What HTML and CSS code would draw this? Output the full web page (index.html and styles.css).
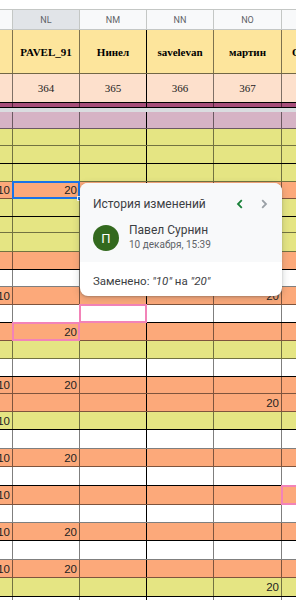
FILE: index.html
```html
<!DOCTYPE html>
<html lang="ru">
<head>
<meta charset="utf-8">
<title>Sheet</title>
<link rel="stylesheet" href="styles.css">
</head>
<body>
<div class="sheet">
  <div class="topbar"></div>
  <div class="row colhead">
    <div class="cell"></div><div class="cell on">NL</div><div class="cell">NM</div><div class="cell">NN</div><div class="cell">NO</div><div class="cell">NP</div>
  </div>
  <div class="row names">
    <div class="cell"></div><div class="cell">PAVEL_91</div><div class="cell">Нинел</div><div class="cell">savelevan</div><div class="cell">мартин</div><div class="cell">Оксана</div>
  </div>
  <div class="row nums">
    <div class="cell"></div><div class="cell">364</div><div class="cell">365</div><div class="cell">366</div><div class="cell">367</div><div class="cell">368</div>
  </div>
  <div class="row band">
    <div class="cell"></div><div class="cell"></div><div class="cell"></div><div class="cell"></div><div class="cell"></div><div class="cell"></div>
  </div>
  <div class="frozen"></div>

  <div class="row r m h17"><div class="cell"></div><div class="cell"></div><div class="cell"></div><div class="cell"></div><div class="cell"></div><div class="cell"></div></div>
  <div class="row r y h17"><div class="cell"></div><div class="cell"></div><div class="cell"></div><div class="cell"></div><div class="cell"></div><div class="cell"></div></div>
  <div class="row r y h18 k"><div class="cell"></div><div class="cell"></div><div class="cell"></div><div class="cell"></div><div class="cell"></div><div class="cell"></div></div>
  <div class="row r y h18"><div class="cell"></div><div class="cell"></div><div class="cell"></div><div class="cell"></div><div class="cell"></div><div class="cell"></div></div>
  <div class="row r o h17"><div class="cell">10</div><div class="cell">20<span class="selbox"></span><span class="handle"></span></div><div class="cell"></div><div class="cell"></div><div class="cell"></div><div class="cell"></div></div>
  <div class="row r y h18 k"><div class="cell"></div><div class="cell"></div><div class="cell"></div><div class="cell"></div><div class="cell"></div><div class="cell"></div></div>
  <div class="row r y h16"><div class="cell"></div><div class="cell"></div><div class="cell"></div><div class="cell"></div><div class="cell"></div><div class="cell"></div></div>
  <div class="row r y h19"><div class="cell"></div><div class="cell"></div><div class="cell"></div><div class="cell"></div><div class="cell"></div><div class="cell"></div></div>
  <div class="row r o h18 k"><div class="cell"></div><div class="cell"></div><div class="cell"></div><div class="cell"></div><div class="cell"></div><div class="cell"></div></div>
  <div class="row r w h17"><div class="cell"></div><div class="cell"></div><div class="cell"></div><div class="cell"></div><div class="cell"></div><div class="cell"></div></div>
  <div class="row r o h18"><div class="cell">10</div><div class="cell"></div><div class="cell"></div><div class="cell"></div><div class="cell">20</div><div class="cell"></div></div>
  <div class="row r w h18 k"><div class="cell"></div><div class="cell"></div><div class="cell"><span class="pinkbox"></span></div><div class="cell"></div><div class="cell"></div><div class="cell"></div></div>
  <div class="row r o h18"><div class="cell"></div><div class="cell">20<span class="pinkbox"></span></div><div class="cell"></div><div class="cell"></div><div class="cell"></div><div class="cell"></div></div>
  <div class="row r y h18"><div class="cell"></div><div class="cell"></div><div class="cell"></div><div class="cell"></div><div class="cell"></div><div class="cell"></div></div>
  <div class="row r w h18 k"><div class="cell"></div><div class="cell"></div><div class="cell"></div><div class="cell"></div><div class="cell"></div><div class="cell"></div></div>
  <div class="row r o h17"><div class="cell">10</div><div class="cell">20</div><div class="cell"></div><div class="cell"></div><div class="cell"></div><div class="cell"></div></div>
  <div class="row r o h18"><div class="cell"></div><div class="cell"></div><div class="cell"></div><div class="cell"></div><div class="cell">20</div><div class="cell"></div></div>
  <div class="row r y h18 k"><div class="cell">10</div><div class="cell"></div><div class="cell"></div><div class="cell"></div><div class="cell"></div><div class="cell"></div></div>
  <div class="row r w h19"><div class="cell"></div><div class="cell"></div><div class="cell"></div><div class="cell"></div><div class="cell"></div><div class="cell"></div></div>
  <div class="row r o h18"><div class="cell">10</div><div class="cell">20</div><div class="cell"></div><div class="cell"></div><div class="cell"></div><div class="cell"></div></div>
  <div class="row r w h19 k"><div class="cell"></div><div class="cell"></div><div class="cell"></div><div class="cell"></div><div class="cell"></div><div class="cell"></div></div>
  <div class="row r o h19"><div class="cell">10</div><div class="cell"></div><div class="cell"></div><div class="cell"></div><div class="cell"></div><div class="cell"><span class="pinkbox"></span></div></div>
  <div class="row r w h18"><div class="cell"></div><div class="cell"></div><div class="cell"></div><div class="cell"></div><div class="cell"></div><div class="cell"></div></div>
  <div class="row r o h18 k"><div class="cell">10</div><div class="cell">20</div><div class="cell"></div><div class="cell"></div><div class="cell"></div><div class="cell"></div></div>
  <div class="row r w h19"><div class="cell"></div><div class="cell"></div><div class="cell"></div><div class="cell"></div><div class="cell"></div><div class="cell"></div></div>
  <div class="row r o h18"><div class="cell">10</div><div class="cell">20</div><div class="cell"></div><div class="cell"></div><div class="cell"></div><div class="cell"></div></div>
  <div class="row r y h19 k"><div class="cell"></div><div class="cell"></div><div class="cell"></div><div class="cell"></div><div class="cell">20</div><div class="cell"></div></div>
  <div class="row r w h18"><div class="cell"></div><div class="cell"></div><div class="cell"></div><div class="cell"></div><div class="cell"></div><div class="cell"></div></div>

  <div class="popup">
    <div class="pop-head">
      <div class="pop-title">
        <span>История изменений</span>
        <span class="nav">
          <svg class="chev" width="12" height="12" viewBox="0 0 12 12"><path d="M7.8 2.2 L4 6 L7.8 9.8" fill="none" stroke="#188038" stroke-width="1.8"/></svg>
          <svg class="chev" width="12" height="12" viewBox="0 0 12 12"><path d="M4.2 2.2 L8 6 L4.2 9.8" fill="none" stroke="#9aa0a6" stroke-width="1.8"/></svg>
        </span>
      </div>
      <div class="user">
        <div class="avatar">П</div>
        <div class="who">
          <div class="name">Павел Сурнин</div>
          <div class="date">10 декабря, 15:39</div>
        </div>
      </div>
    </div>
    <div class="pop-body">Заменено: <i>"10"</i> на <i>"20"</i></div>
  </div>
</div>
</body>
</html>
```

FILE: styles.css
```css
* { box-sizing: border-box; }
html, body { margin: 0; padding: 0; }
body {
  width: 296px;
  height: 600px;
  overflow: hidden;
  background: #fff;
  font-family: "Liberation Sans", Arial, sans-serif;
}
.sheet { position: relative; width: 296px; height: 600px; overflow: hidden; }

.topbar { height: 10px; border-bottom: 1px solid #c4c7c5; background: #fff; }

.row {
  display: grid;
  grid-template-columns: 13px 67px 67px 67px 68px 67px;
  width: 349px;
}
.cell {
  position: relative;
  border-right: 1px solid rgba(0, 0, 0, 0.5);
  white-space: nowrap;
}
.cell:nth-child(3) { border-right-color: #000; }

.colhead {
  height: 20px;
  background: #f8f9fa;
  border-bottom: 1px solid #c4c7c5;
  font-family: Roboto, "Liberation Sans", sans-serif;
  font-size: 9px;
  color: #5f6368;
}
.colhead .cell {
  border-right-color: #c4c7c5;
  display: flex;
  align-items: center;
  justify-content: center;
}
.colhead .on { background: #e1e4e8; }

.names {
  height: 44px;
  background: #fde59c;
  border-bottom: 1px solid rgba(0, 0, 0, 0.55);
  font-family: "Liberation Serif", "Times New Roman", serif;
  font-weight: bold;
  font-size: 11px;
  color: #000;
}
.names .cell, .nums .cell {
  display: flex;
  align-items: center;
  justify-content: center;
  overflow: hidden;
}
.names .cell:last-child { justify-content: flex-start; padding-left: 10px; }

.nums {
  height: 29px;
  background: #fde0cc;
  border-bottom: 1px solid #000;
  font-family: "Liberation Serif", "Times New Roman", serif;
  font-size: 11px;
  color: #222;
}

.band {
  height: 5px;
  background: #a64d79;
  border-bottom: 1px solid #000;
}

.frozen { height: 4px; background: #dadce0; }

.r {
  border-bottom: 1px solid rgba(0, 0, 0, 0.5);
  font-size: 11.5px;
  color: #222;
}
.r .cell {
  display: flex;
  align-items: center;
  justify-content: flex-end;
  padding-right: 2px;
}
.r.k { border-bottom-color: #000; }
.h16 { height: 16px; }
.h17 { height: 17px; }
.h18 { height: 18px; }
.h19 { height: 19px; }

.m { background: #d6b3c5; }
.y { background: #e5e583; }
.o { background: #fca97a; }
.w { background: #fff; }

.selbox {
  position: absolute;
  left: -1px; top: -1px; right: -1px; bottom: -1px;
  border: 2px solid #1a73e8;
}
.handle {
  position: absolute;
  right: -3px; bottom: -3px;
  width: 5px; height: 5px;
  background: #1a73e8;
  border: 1px solid #fff;
}
.pinkbox {
  position: absolute;
  left: -1px; top: -1px; right: -1px; bottom: -1px;
  border: 2px solid #f283b8;
}

.popup {
  position: absolute;
  left: 80px;
  top: 183px;
  width: 202px;
  height: 113px;
  background: #fff;
  border-radius: 8px;
  overflow: hidden;
  box-shadow: 0 1px 2px rgba(60, 64, 67, 0.3), 0 2px 6px 2px rgba(60, 64, 67, 0.15);
  font-family: Roboto, "Liberation Sans", sans-serif;
  color: #3c4043;
}
.pop-head {
  height: 79px;
  background: #f8f9fa;
  padding: 14px 12px 0 13px;
}
.pop-title {
  display: flex;
  align-items: center;
  justify-content: space-between;
  height: 14px;
  font-size: 12px;
}
.nav { display: flex; align-items: center; gap: 12px; }
.chev { display: block; }

.user {
  display: flex;
  align-items: center;
  gap: 10px;
  margin-top: 14px;
}
.avatar {
  width: 26px;
  height: 26px;
  border-radius: 50%;
  background: #33691e;
  color: #fff;
  font-size: 13px;
  display: flex;
  align-items: center;
  justify-content: center;
}
.who { display: flex; flex-direction: column; margin-top: -2px; }
.name { font-size: 12px; line-height: 14px; }
.date { font-size: 10px; line-height: 13px; color: #5f6368; margin-top: 1px; }

.pop-body {
  padding: 12px 13px 0;
  font-size: 11.5px;
  line-height: 14px;
}
.pop-body i { font-style: italic; }
```
